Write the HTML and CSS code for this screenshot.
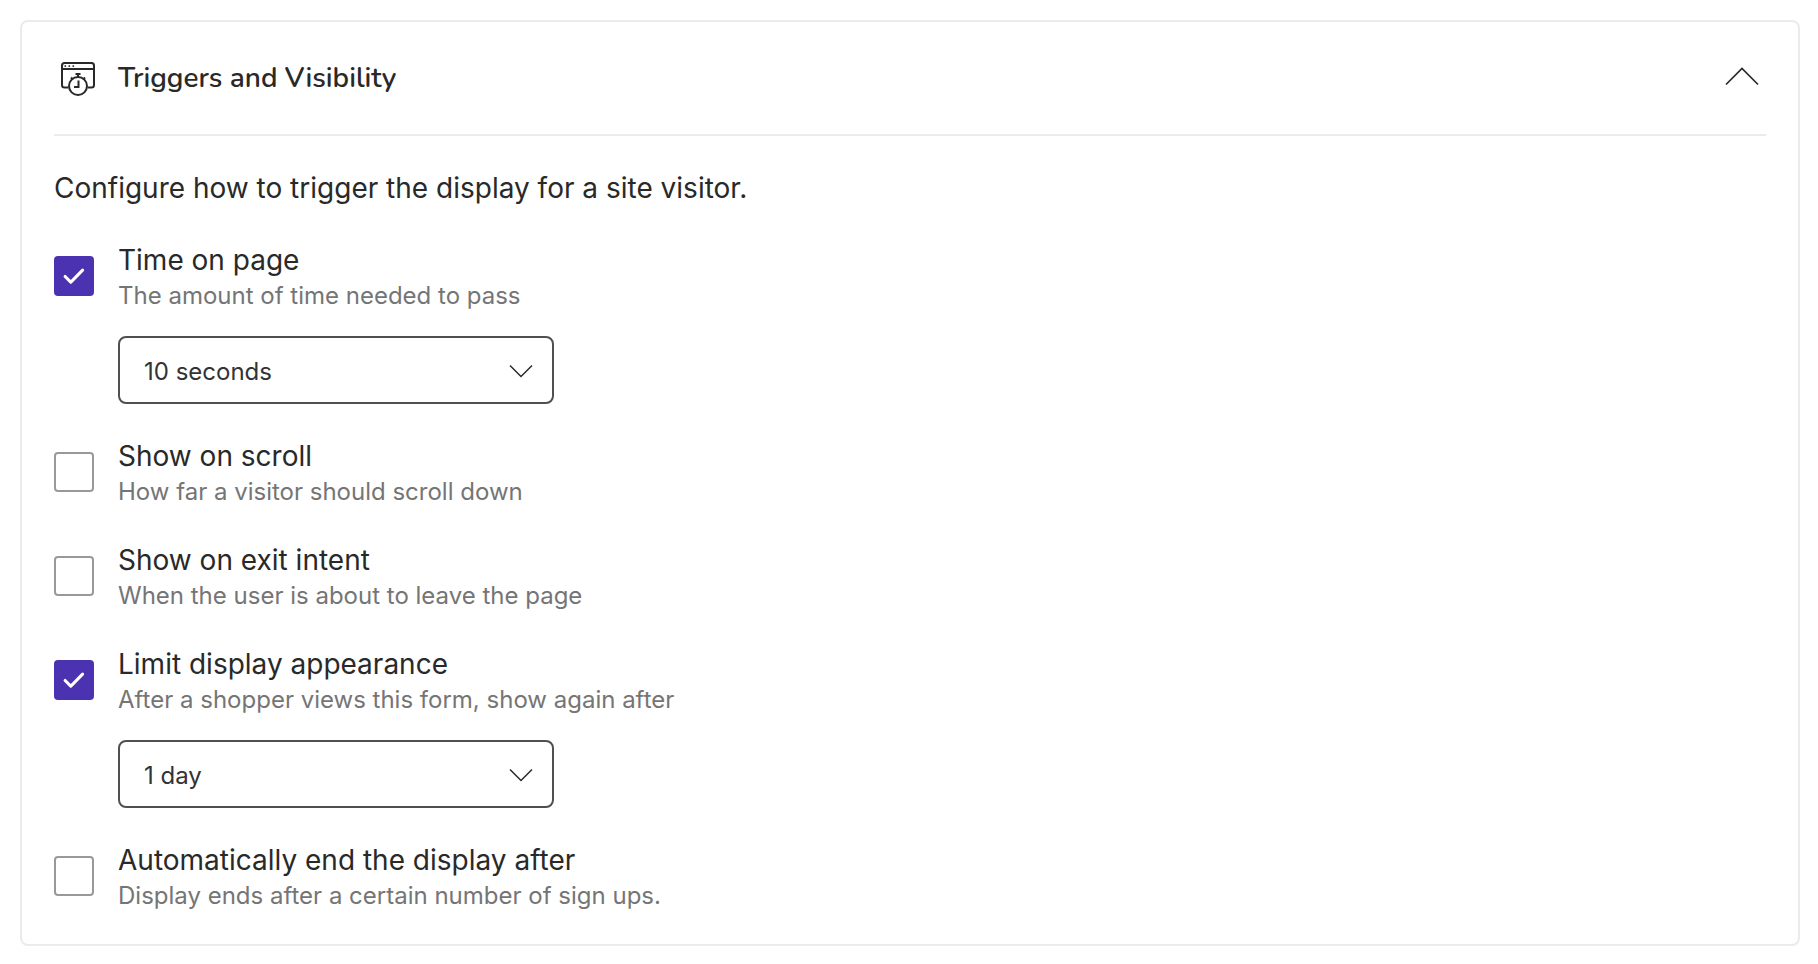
FILE: index.html
```html
<!DOCTYPE html>
<html lang="en">
<head>
<meta charset="utf-8">
<meta name="viewport" content="width=device-width, initial-scale=1">
<title>Triggers and Visibility</title>
<link rel="stylesheet" href="styles.css">
</head>
<body>
<main class="panel">
  <header class="panel-header">
    <svg class="panel-icon" viewBox="0 0 48 48" aria-hidden="true">
      <g fill="none" stroke="currentColor" stroke-width="2">
        <path d="M14.5 33.5H10.5Q8 33.5 8 31V11.500Q8 9 10.500 9H37.500Q40 9 40 11.500V31Q40 33.500 37.500 33.500H33.500"/>
        <path d="M8 15H40"/>
        <circle cx="24" cy="32" r="9"/>
        <path d="M24 23V20M21.500 20H26.500M17 23.500L19 25.500M31 23.500L29 25.500"/>
        <path d="M24.500 26.500V33H20"/>
      </g>
      <g fill="currentColor">
        <rect x="10.500" y="11.300" width="1.600" height="1.600"/>
        <rect x="14.500" y="11.300" width="1.600" height="1.600"/>
        <rect x="18.500" y="11.300" width="1.600" height="1.600"/>
      </g>
    </svg>
    <h1 class="panel-title">Triggers and Visibility</h1>
    <button class="collapse" type="button" aria-label="Collapse section" aria-expanded="true">
      <svg viewBox="0 0 48 48" aria-hidden="true"><path d="M8 30.500L24 14.500L40 30.500"/></svg>
    </button>
  </header>

  <form class="panel-body">
    <p class="intro">Configure how to trigger the display for a site visitor.</p>

    <div class="option">
      <input class="check" type="checkbox" id="time" checked>
      <div class="option-content">
        <label class="option-text" for="time">
          <span class="option-name">Time on page</span>
          <span class="option-hint">The amount of time needed to pass</span>
        </label>
        <div class="picker">
          <select class="picker-select" aria-label="Time on page">
            <option>10 seconds</option>
          </select>
          <svg class="picker-arrow" viewBox="0 0 24 24" aria-hidden="true"><path d="M1 7.500L12 18.500L23 7.500"/></svg>
        </div>
      </div>
    </div>

    <div class="option">
      <input class="check" type="checkbox" id="scroll">
      <div class="option-content">
        <label class="option-text" for="scroll">
          <span class="option-name">Show on scroll</span>
          <span class="option-hint">How far a visitor should scroll down</span>
        </label>
      </div>
    </div>

    <div class="option">
      <input class="check" type="checkbox" id="exit">
      <div class="option-content">
        <label class="option-text" for="exit">
          <span class="option-name">Show on exit intent</span>
          <span class="option-hint">When the user is about to leave the page</span>
        </label>
      </div>
    </div>

    <div class="option">
      <input class="check" type="checkbox" id="limit" checked>
      <div class="option-content">
        <label class="option-text" for="limit">
          <span class="option-name">Limit display appearance</span>
          <span class="option-hint">After a shopper views this form, show again after</span>
        </label>
        <div class="picker">
          <select class="picker-select" aria-label="Limit display appearance">
            <option>1 day</option>
          </select>
          <svg class="picker-arrow" viewBox="0 0 24 24" aria-hidden="true"><path d="M1 7.500L12 18.500L23 7.500"/></svg>
        </div>
      </div>
    </div>

    <div class="option">
      <input class="check" type="checkbox" id="end">
      <div class="option-content">
        <label class="option-text" for="end">
          <span class="option-name">Automatically end the display after</span>
          <span class="option-hint">Display ends after a certain number of sign ups.</span>
        </label>
      </div>
    </div>
  </form>
</main>
</body>
</html>
```

FILE: styles.css
```css
* {
  box-sizing: border-box;
}

body {
  margin: 0;
  padding: 20px 18px 18px 20px;
  background: #fff;
  color: #292929;
  font-family: Inter, "Liberation Sans", sans-serif;
}

.panel {
  padding: 0 32px 32px;
  border: 2px solid #ebebeb;
  border-radius: 8px;
}

.panel-header {
  display: flex;
  align-items: center;
  gap: 16px;
  padding: 32px 0;
  border-bottom: 2px solid #ebebeb;
}

.panel-icon {
  width: 48px;
  height: 48px;
}

.panel-title {
  flex: 1;
  margin: 0;
  font-family: Nunito, "Noto Sans", sans-serif;
  font-size: 28px;
  font-weight: 600;
  line-height: 36px;
}

.collapse {
  width: 48px;
  height: 48px;
  padding: 0;
  border: 0;
  background: none;
  color: inherit;
  cursor: pointer;
}

.collapse svg {
  display: block;
  fill: none;
  stroke: currentColor;
  stroke-width: 1.7;
}

.panel-body {
  display: flex;
  flex-direction: column;
  gap: 34px;
  padding-top: 32px;
}

.intro {
  margin: 0;
  font-size: 28px;
  line-height: 40px;
}

.option {
  display: flex;
  align-items: flex-start;
  gap: 24px;
}

.check {
  display: grid;
  place-content: center;
  flex: none;
  width: 40px;
  height: 40px;
  margin: 14px 0 0;
  border: 2px solid #999;
  border-radius: 4px;
  background: #fff;
  appearance: none;
}

.check:checked {
  border-color: #4b32b0;
  background: #4b32b0;
}

.check:checked::before {
  content: "";
  width: 24px;
  height: 24px;
  background: #fff;
  clip-path: path("M2 13.500Q1 12.400 2 11.400Q3.100 10.300 4.200 11.400L8.800 16L19.500 5Q20.600 4 21.700 5Q22.700 6.100 21.700 7.200L9.900 19.300Q8.800 20.300 7.700 19.300Z");
}

.option-content {
  display: flex;
  flex-direction: column;
  align-items: flex-start;
  gap: 24px;
}

.option-text {
  display: flex;
  flex-direction: column;
  gap: 2px;
}

.option-name {
  font-size: 28px;
  line-height: 36px;
}

.option-hint {
  color: #757575;
  font-size: 24px;
  line-height: 32px;
}

.picker {
  display: grid;
  align-items: center;
  width: 436px;
  max-width: 100%;
}

.picker-select {
  grid-area: 1 / 1;
  width: 100%;
  height: 68px;
  padding: 2px 56px 0 24px;
  border: 2px solid #505050;
  border-radius: 8px;
  background: #fff;
  color: #333;
  font: inherit;
  font-size: 24px;
  appearance: none;
}

.picker-arrow {
  grid-area: 1 / 1;
  justify-self: end;
  width: 24px;
  height: 24px;
  margin-right: 21px;
  fill: none;
  stroke: #292929;
  stroke-width: 1.5;
  pointer-events: none;
}
```
